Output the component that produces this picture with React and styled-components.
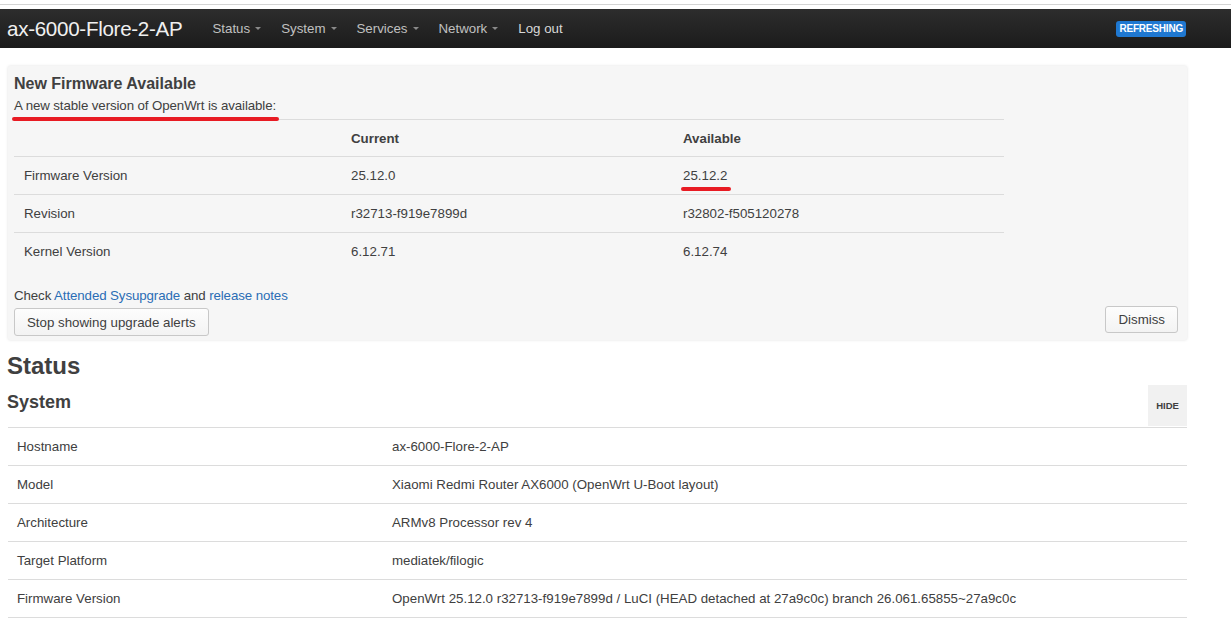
import React from 'react';
import styled, { createGlobalStyle } from 'styled-components';

const GlobalStyle = createGlobalStyle`
  body {
    margin: 0;
    background: #fff;
    color: #404040;
    font-family: "Liberation Sans", Arial, sans-serif;
    font-size: 13.3px;
  }
`;

const TopStrip = styled.div`
  height: 4px;
  border-bottom: 1px solid #d4d4d4;
  margin-bottom: 4px;
`;

const Navbar = styled.header`
  height: 39px;
  display: flex;
  align-items: center;
  padding: 0 45px 0 7px;
  background: linear-gradient(to bottom, #2d2d2d, #1b1b1b);
`;

const Brand = styled.a`
  font-size: 20.6px;
  color: #f0f0f0;
  margin-right: 20px;
  letter-spacing: -0.3px;
`;

const NavItem = styled.a`
  font-size: 13.3px;
  color: ${(p) => (p.$light ? '#d8d8d8' : '#c0c0c0')};
  padding: 0 10px;
  display: flex;
  align-items: center;
`;

const Caret = styled.span`
  width: 0;
  height: 0;
  margin-left: 5px;
  border-left: 3px solid transparent;
  border-right: 3px solid transparent;
  border-top: 3px solid #8a8a8a;
`;

const Badge = styled.span`
  margin-left: auto;
  background: #1f78d1;
  color: #fff;
  font-size: 10px;
  line-height: 12px;
  font-weight: bold;
  padding: 2px 3px;
  border-radius: 3px;
  letter-spacing: -0.2px;
`;

const Main = styled.main`
  margin: 0 44px 0 8px;
`;

const Alert = styled.section`
  position: relative;
  margin-top: 18px;
  padding: 8px 9px 4px 6px;
  background: #f6f6f6;
  border-radius: 2px;
  box-shadow: 0 0 3px rgba(0, 0, 0, 0.13);
`;

const AlertTitle = styled.h4`
  margin: 0;
  font-size: 16px;
  line-height: 20px;
  font-weight: bold;
`;

const AlertText = styled.p`
  margin: 4px 0 5px;
  line-height: 16px;
  letter-spacing: -0.1px;
`;

const Mark = styled.span`
  position: absolute;
  height: 4px;
  border-radius: 3px;
  background: #e81b23;
  left: ${(p) => p.$x}px;
  top: ${(p) => p.$y}px;
  width: ${(p) => p.$w}px;
`;

const FwTable = styled.div`
  width: 990px;
`;

const FwRow = styled.div`
  display: grid;
  grid-template-columns: 327px 332px 1fr;
  height: ${(p) => (p.$head ? 36 : 37)}px;
  align-items: center;
  border-top: 1px solid #dcdcdc;
  font-weight: ${(p) => (p.$head ? 'bold' : 'normal')};
`;

const Cell = styled.div`
  padding: 0 10px;
`;

const CheckLine = styled.p`
  margin: 18px 0 4px;
  line-height: 16px;
  letter-spacing: -0.1px;
`;

const Link = styled.a`
  color: #2a6db5;
  text-decoration: none;
`;

const ButtonRow = styled.div`
  display: flex;
  justify-content: space-between;
  align-items: flex-start;
`;

const Button = styled.button`
  font-family: inherit;
  font-size: 13.3px;
  color: #404040;
  height: ${(p) => p.$h || 28}px;
  padding: 0 12px;
  margin-top: ${(p) => p.$mt || 0}px;
  background: linear-gradient(to bottom, #fdfdfd, #f3f3f3);
  border: 1px solid #c8c8c8;
  border-radius: 3px;
`;

const PageTitle = styled.h2`
  margin: 12px 0 0 -1px;
  font-size: 24px;
  line-height: 28px;
  font-weight: bold;
`;

const SectionHead = styled.div`
  display: flex;
  justify-content: space-between;
  align-items: flex-start;
  margin: 5px 0 1px;
`;

const SectionTitle = styled.h3`
  margin: 6px 0 0 -1px;
  font-size: 18px;
  line-height: 22px;
  font-weight: bold;
`;

const HideButton = styled.button`
  width: 39px;
  height: 41px;
  border: none;
  background: #f1f1f1;
  color: #404040;
  font-family: inherit;
  font-size: 9.5px;
  font-weight: bold;
  padding: 0;
`;

const InfoTable = styled.div`
  border-bottom: 1px solid #dcdcdc;
`;

const InfoRow = styled.div`
  display: grid;
  grid-template-columns: 375px 1fr;
  height: 37px;
  align-items: center;
  border-top: 1px solid #dcdcdc;
`;

const InfoCell = styled.div`
  padding: 0 9px;
`;

const firmware = [
  ['Firmware Version', '25.12.0', '25.12.2'],
  ['Revision', 'r32713-f919e7899d', 'r32802-f505120278'],
  ['Kernel Version', '6.12.71', '6.12.74'],
];

const system = [
  ['Hostname', 'ax-6000-Flore-2-AP'],
  ['Model', 'Xiaomi Redmi Router AX6000 (OpenWrt U-Boot layout)'],
  ['Architecture', 'ARMv8 Processor rev 4'],
  ['Target Platform', 'mediatek/filogic'],
  ['Firmware Version', 'OpenWrt 25.12.0 r32713-f919e7899d / LuCI (HEAD detached at 27a9c0c) branch 26.061.65855~27a9c0c'],
];

const menus = ['Status', 'System', 'Services', 'Network'];

export default function App() {
  return (
    <>
      <GlobalStyle />
      <TopStrip />
      <Navbar>
        <Brand>ax-6000-Flore-2-AP</Brand>
        {menus.map((m) => (
          <NavItem key={m}>
            {m}
            <Caret />
          </NavItem>
        ))}
        <NavItem $light>Log out</NavItem>
        <Badge>REFRESHING</Badge>
      </Navbar>
      <Main>
        <Alert>
          <AlertTitle>New Firmware Available</AlertTitle>
          <AlertText>A new stable version of OpenWrt is available:</AlertText>
          <Mark $x={4} $y={51} $w={267} />
          <FwTable>
            <FwRow $head>
              <Cell />
              <Cell>Current</Cell>
              <Cell>Available</Cell>
            </FwRow>
            {firmware.map(([label, cur, avail]) => (
              <FwRow key={label}>
                <Cell>{label}</Cell>
                <Cell>{cur}</Cell>
                <Cell>{avail}</Cell>
              </FwRow>
            ))}
          </FwTable>
          <Mark $x={673} $y={121} $w={50} />
          <CheckLine>
            Check <Link>Attended Sysupgrade</Link> and <Link>release notes</Link>
          </CheckLine>
          <ButtonRow>
            <Button>Stop showing upgrade alerts</Button>
            <Button $h={27} $mt={-2}>Dismiss</Button>
          </ButtonRow>
        </Alert>
        <PageTitle>Status</PageTitle>
        <SectionHead>
          <SectionTitle>System</SectionTitle>
          <HideButton>HIDE</HideButton>
        </SectionHead>
        <InfoTable>
          {system.map(([label, value]) => (
            <InfoRow key={label}>
              <InfoCell>{label}</InfoCell>
              <InfoCell>{value}</InfoCell>
            </InfoRow>
          ))}
        </InfoTable>
      </Main>
    </>
  );
}
